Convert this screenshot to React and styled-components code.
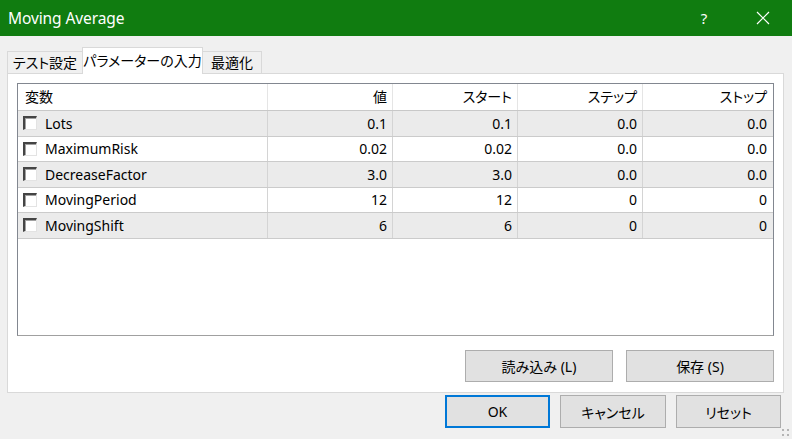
import React from "react";
import styled, { createGlobalStyle } from "styled-components";

const Global = createGlobalStyle`
  html, body { margin: 0; padding: 0; background: #f0f0f0; }
  body { font-family: "Noto Sans", "Noto Sans CJK JP", sans-serif; }
  #root { width: 792px; height: 439px; overflow: hidden; }
`;

const FONT = `"Noto Sans", "Noto Sans CJK JP", sans-serif`;

const Window = styled.div`
  position: relative;
  width: 792px;
  height: 439px;
  background: #f0f0f0;
  display: flex;
  flex-direction: column;
  font-family: ${FONT};
  font-feature-settings: "palt";
  color: #000;
`;

const TitleBar = styled.div`
  height: 36px;
  flex: none;
  background: #107c10;
  display: flex;
  align-items: center;
  color: #fff;
`;

const Title = styled.div`
  flex: 1;
  padding-left: 8px;
  font-size: 15.5px;
  letter-spacing: -0.1px;
`;

const TitleButton = styled.div`
  width: ${(p) => p.$w}px;
  height: 36px;
  display: flex;
  align-items: center;
  justify-content: center;
  font-size: 15px;
`;

const TabStrip = styled.div`
  display: flex;
  align-items: flex-end;
  margin: 11px 0 0 7px;
  height: 27px;
  position: relative;
  z-index: 1;
  margin-bottom: -1px;
`;

const Tab = styled.div`
  box-sizing: border-box;
  width: ${(p) => p.$w}px;
  height: ${(p) => (p.$active ? 27 : 23)}px;
  background: ${(p) => (p.$active ? "#fff" : "#f0f0f0")};
  border: 1px solid #d9d9d9;
  border-bottom: ${(p) => (p.$active ? "none" : "1px solid #d9d9d9")};
  margin-left: ${(p) => (p.$first ? 0 : -1)}px;
  display: flex;
  align-items: center;
  justify-content: center;
  font-size: 14px;
  padding-bottom: ${(p) => (p.$active ? 3 : 1)}px;
  position: relative;
  z-index: ${(p) => (p.$active ? 2 : 1)};
`;

const Panel = styled.div`
  box-sizing: border-box;
  margin-left: 7px;
  width: 777px;
  height: 320px;
  background: #fff;
  border: 1px solid #d9d9d9;
  padding: 9px 9px 10px 9px;
  display: flex;
  flex-direction: column;
`;

const List = styled.div`
  box-sizing: border-box;
  height: 253px;
  border: 1px solid #828790;
  border-bottom-color: #a0a0a0;
  background: #fff;
  display: flex;
  flex-direction: column;
`;

const COLS = "250px 125px 125px 125px 1fr";

const HeaderRow = styled.div`
  display: grid;
  grid-template-columns: ${COLS};
  height: 27px;
  box-sizing: border-box;
  border-bottom: 1px solid #c8c8c8;
`;

const HeaderCell = styled.div`
  display: flex;
  align-items: center;
  justify-content: ${(p) => (p.$left ? "flex-start" : "flex-end")};
  padding: ${(p) => (p.$left ? "0 0 0 7px" : p.$last ? "0 6px 0 0" : "0 5px 0 0")};
  border-right: ${(p) => (p.$last ? "none" : "1px solid #e5e5e5")};
  font-size: 14px;
  padding-bottom: 2px;
`;

const Row = styled.div`
  display: grid;
  grid-template-columns: ${COLS};
  height: 25.5px;
  box-sizing: border-box;
  border-bottom: 1px solid #cbcbcb;
  background: ${(p) => (p.$odd ? "#ebebeb" : "#fff")};
`;

const Cell = styled.div`
  display: flex;
  align-items: center;
  justify-content: ${(p) => (p.$left ? "flex-start" : "flex-end")};
  padding: ${(p) => (p.$left ? "0 0 0 5px" : p.$last ? "0 6px 0 0" : "0 5px 0 0")};
  border-right: ${(p) => (p.$last ? "none" : "1px solid #d4d4d4")};
  font-size: 14px;
  white-space: nowrap;
`;

const Check = styled.span`
  box-sizing: border-box;
  width: 14px;
  height: 14px;
  flex: none;
  background: #fff;
  border-top: 2px solid #444;
  border-left: 2px solid #444;
  border-right: 1px solid #e3e3e3;
  border-bottom: 1px solid #e3e3e3;
  box-shadow: inset 1px 1px 0 #a0a0a0;
  margin-right: 8px;
`;

const PanelButtons = styled.div`
  display: flex;
  justify-content: flex-end;
  gap: 13px;
  margin-top: 14px;
`;

const Button = styled.button`
  box-sizing: border-box;
  width: ${(p) => p.$w}px;
  height: ${(p) => p.$h}px;
  background: #e1e1e1;
  border: ${(p) => (p.$default ? "2px solid #0078d7" : "1px solid #adadad")};
  font-family: ${FONT};
  font-feature-settings: "palt";
  font-size: 14px;
  color: #000;
  padding: 0;
  display: flex;
  align-items: center;
  justify-content: center;
`;

const Footer = styled.div`
  display: flex;
  justify-content: flex-end;
  gap: 10px;
  margin-top: 2px;
  padding-right: 11px;
`;

const Grip = styled.svg`
  position: absolute;
  right: 2px;
  bottom: 2px;
`;

const rows = [
  ["Lots", "0.1", "0.1", "0.0", "0.0"],
  ["MaximumRisk", "0.02", "0.02", "0.0", "0.0"],
  ["DecreaseFactor", "3.0", "3.0", "0.0", "0.0"],
  ["MovingPeriod", "12", "12", "0", "0"],
  ["MovingShift", "6", "6", "0", "0"],
];

export default function App() {
  return (
    <>
      <Global />
      <Window>
        <TitleBar>
          <Title>Moving Average</Title>
          <TitleButton $w={60}>?</TitleButton>
          <TitleButton $w={58}>
            <svg width="14" height="14" viewBox="0 0 14 14">
              <path d="M1 1 L13 13 M13 1 L1 13" stroke="#fff" strokeWidth="1.2" />
            </svg>
          </TitleButton>
        </TitleBar>
        <TabStrip>
          <Tab $first $w={76}>テスト設定</Tab>
          <Tab $active $w={121}>パラメーターの入力</Tab>
          <Tab $w={60}>最適化</Tab>
        </TabStrip>
        <Panel>
          <List>
            <HeaderRow>
              <HeaderCell $left>変数</HeaderCell>
              <HeaderCell>値</HeaderCell>
              <HeaderCell>スタート</HeaderCell>
              <HeaderCell>ステップ</HeaderCell>
              <HeaderCell $last>ストップ</HeaderCell>
            </HeaderRow>
            {rows.map((r, i) => (
              <Row key={r[0]} $odd={i % 2 === 0}>
                <Cell $left>
                  <Check />
                  {r[0]}
                </Cell>
                <Cell>{r[1]}</Cell>
                <Cell>{r[2]}</Cell>
                <Cell>{r[3]}</Cell>
                <Cell $last>{r[4]}</Cell>
              </Row>
            ))}
          </List>
          <PanelButtons>
            <Button $w={148} $h={32}>読み込み (L)</Button>
            <Button $w={148} $h={32}>保存 (S)</Button>
          </PanelButtons>
        </Panel>
        <Footer>
          <Button $default $w={105} $h={33}>OK</Button>
          <Button $w={106} $h={33}>キャンセル</Button>
          <Button $w={105} $h={33}>リセット</Button>
        </Footer>
        <Grip width="8" height="8" viewBox="0 0 8 8">
          <rect x="0" y="0" width="2" height="2" fill="#b4b4b4" />
          <rect x="5" y="0" width="2" height="2" fill="#b4b4b4" />
          <rect x="0" y="5" width="2" height="2" fill="#b4b4b4" />
          <rect x="5" y="5" width="2" height="2" fill="#b4b4b4" />
        </Grip>
      </Window>
    </>
  );
}
